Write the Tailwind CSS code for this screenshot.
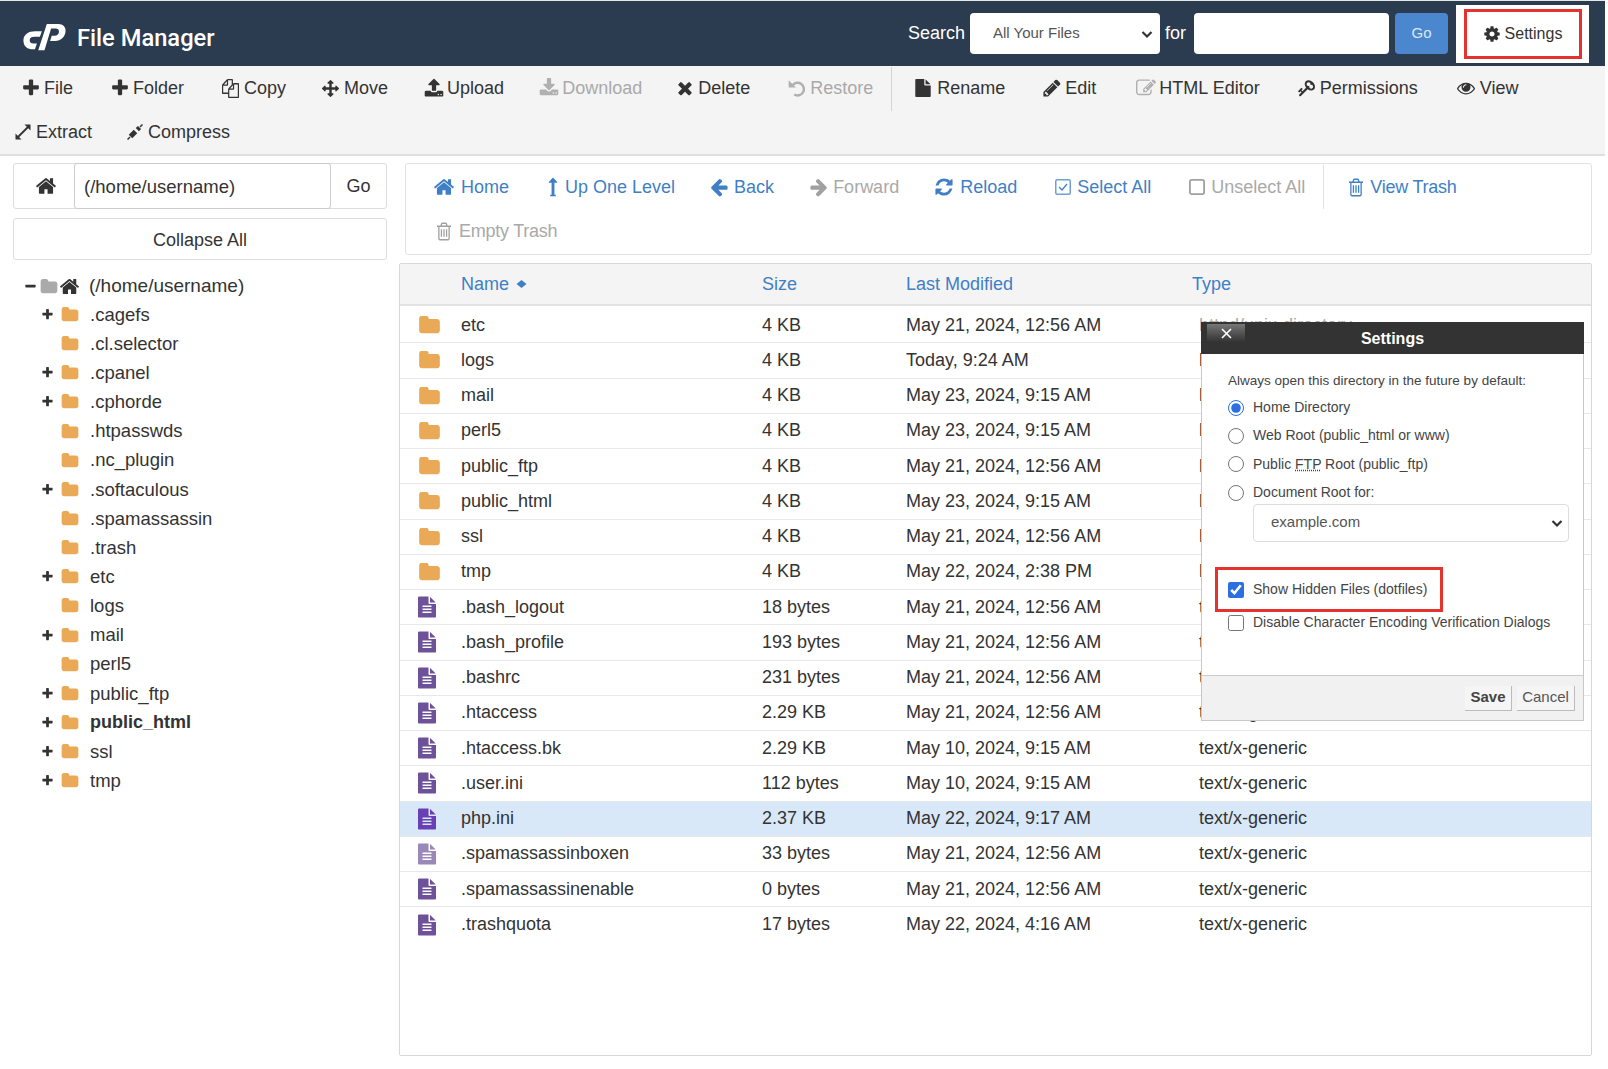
<!DOCTYPE html>
<html lang="en">
<head>
<meta charset="UTF-8">
<title>File Manager</title>
<script src="https://cdn.jsdelivr.net/npm/@tailwindcss/browser@4"></script>
</head>
<body class="bg-white text-[#333] text-[18px] font-['Liberation_Sans',Arial,sans-serif]">

<!-- icon set -->
<svg class="hidden">
  <symbol id="i-plus" viewBox="0 0 1792 1792"><path d="M1600 736v192q0 40-28 68t-68 28h-416v416q0 40-28 68t-68 28h-192q-40 0-68-28t-28-68v-416h-416q-40 0-68-28t-28-68v-192q0-40 28-68t68-28h416v-416q0-40 28-68t68-28h192q40 0 68 28t28 68v416h416q40 0 68 28t28 68z"/></symbol>
  <symbol id="i-minus" viewBox="0 0 1792 1792"><path d="M1600 736v192q0 40-28 68t-68 28h-1216q-40 0-68-28t-28-68v-192q0-40 28-68t68-28h1216q40 0 68 28t28 68z"/></symbol>
  <symbol id="i-home" viewBox="0 0 1792 1792"><path d="M1472 992v480q0 26-19 45t-45 19h-384v-384h-256v384h-384q-26 0-45-19t-19-45v-480q0-1 .5-3t.5-3l575-474 575 474q1 2 1 6zm223-69l-62 74q-8 9-21 11h-3q-13 0-21-7l-692-577-692 577q-12 8-24 7-13-2-21-11l-62-74q-8-10-7-23.5t11-21.5l719-599q32-26 76-26t76 26l244 204v-195q0-14 9-23t23-9h192q14 0 23 9t9 23v408l219 182q10 8 11 21.5t-7 23.5z"/></symbol>
  <symbol id="i-folder" viewBox="0 150 1792 1450"><path d="M1728 608v704q0 92-66 158t-158 66h-1216q-92 0-158-66t-66-158v-960q0-92 66-158t158-66h320q92 0 158 66t66 158v32h672q92 0 158 66t66 158z"/></symbol>
  <symbol id="i-times" viewBox="0 0 1792 1792"><path d="M1490 1322q0 40-28 68l-136 136q-28 28-68 28t-68-28l-294-294-294 294q-28 28-68 28t-68-28l-136-136q-28-28-28-68t28-68l294-294-294-294q-28-28-28-68t28-68l136-136q28-28 68-28t68 28l294 294 294-294q28-28 68-28t68 28l136 136q28 28 28 68t-28 68l-294 294 294 294q28 28 28 68z"/></symbol>
  <symbol id="i-left" viewBox="0 0 1792 1792"><path d="M1664 896v128q0 53-32.5 90.5t-84.5 37.5h-704l293 294q38 36 38 90t-38 90l-75 76q-38 38-91 38-52 0-90-38l-651-652q-37-37-37-90 0-52 37-91l651-650q38-38 90-38 53 0 91 38l75 74q38 38 38 91t-38 91l-293 293h704q52 0 84.5 37.5t32.5 90.5z"/></symbol>
  <symbol id="i-right" viewBox="0 0 1792 1792"><path d="M1600 960q0 54-37 91l-651 651q-39 37-91 37-51 0-90-37l-75-75q-38-38-38-91t38-91l293-293h-704q-52 0-84.5-37.5t-32.5-90.5v-128q0-53 32.5-90.5t84.5-37.5h704l-293-294q-38-36-38-90t38-90l75-75q38-38 90-38 53 0 91 38l651 651q37 35 37 90z"/></symbol>
  <symbol id="i-file" viewBox="0 0 1792 1792"><path d="M1152 512v-472q22 14 36 28l408 408q14 14 28 36h-472zm-128 32q0 40 28 68t68 28h544v1056q0 40-28 68t-68 28h-1344q-40 0-68-28t-28-68v-1600q0-40 28-68t68-28h800v544z"/></symbol>
  <symbol id="i-doc" viewBox="128 0 1536 1792"><path d="M1596 476q14 14 28 36h-472v-472q22 14 36 28zm-476 164h544v1056q0 40-28 68t-68 28h-1344q-40 0-68-28t-28-68v-1600q0-40 28-68t68-28h800v544q0 40 28 68t68 28zm160 736v-64q0-14-9-23t-23-9h-704q-14 0-23 9t-9 23v64q0 14 9 23t23 9h704q14 0 23-9t9-23zm0-256v-64q0-14-9-23t-23-9h-704q-14 0-23 9t-9 23v64q0 14 9 23t23 9h704q14 0 23-9t9-23zm0-256v-64q0-14-9-23t-23-9h-704q-14 0-23 9t-9 23v64q0 14 9 23t23 9h704q14 0 23-9t9-23z"/></symbol>
  <symbol id="i-gear" viewBox="0 0 1792 1792"><path d="M1152 896q0-106-75-181t-181-75-181 75-75 181 75 181 181 75 181-75 75-181zm512-109v222q0 12-8 23t-20 13l-185 28q-19 54-39 91 35 50 107 138 10 12 10 25t-9 23q-27 37-99 108t-94 71q-12 0-26-9l-138-108q-44 23-91 38-16 136-29 186-7 28-36 28h-222q-14 0-24.5-8.5t-11.5-21.5l-28-184q-49-16-90-37l-141 107q-10 9-25 9-14 0-25-11-126-114-165-168-7-10-7-23 0-12 8-23 15-21 51-66.5t54-70.5q-27-50-41-99l-183-27q-13-2-21-12.5t-8-23.5v-222q0-12 8-23t19-13l186-28q14-46 39-92-40-57-107-138-10-12-10-24 0-10 9-23 26-36 98.5-107.5t94.5-71.5q13 0 26 10l138 107q44-23 91-38 16-136 29-186 7-28 36-28h222q14 0 24.5 8.5t11.5 21.5l28 184q49 16 90 37l142-107q9-9 24-9 13 0 25 10 129 119 165 170 7 8 7 22 0 12-8 23-15 21-51 66.5t-54 70.5q26 50 41 98l183 28q13 2 21 12.5t8 23.5z"/></symbol>
  <symbol id="i-pencil" viewBox="0 0 1792 1792"><path d="M491 1536l91-91-235-235-91 91v107h128v128h107zm523-928q0-22-22-22-10 0-17 7l-542 542q-7 7-7 17 0 22 22 22 10 0 17-7l542-542q7-7 7-17zm-54-192l416 416-832 832h-416v-416zm683 96q0 53-37 90l-166 166-416-416 166-165q36-38 90-38 53 0 91 38l235 234q37 39 37 91z"/></symbol>
  <symbol id="i-key" viewBox="0 0 1792 1792"><path d="M832 512q0-80-56-136t-136-56-136 56-56 136q0 42 19 83-41-19-83-19-80 0-136 56t-56 136 56 136 136 56 136-56 56-136q0-42-19-83 41 19 83 19 80 0 136-56t56-136zm851 704q0 17-49 66t-66 49q-9 0-28.5-16t-36.5-33-38.5-40-24.5-26l-96 96 220 220q28 28 28 68 0 42-39 81t-81 39q-40 0-68-28l-671-671q-176 131-365 131-163 0-265.5-102.5t-102.5-265.5q0-160 95-313t248-248 313-95q163 0 265.5 102.5t102.5 265.5q0 189-131 365l355 355 96-96q-3-3-26-24.5t-40-38.5-33-36.5-16-28.5q0-17 49-66t66-49q13 0 23 10 6 6 46 44.5t82 79.5 86.5 86 73 78 28.5 41z"/></symbol>
  <symbol id="i-eye" viewBox="0 0 1792 1792"><path d="M1664 960q-152-236-381-353 61 104 61 225 0 185-131.5 316.5t-316.5 131.5-316.5-131.5-131.5-316.5q0-121 61-225-229 117-381 353 133 205 333.5 326.5t434.5 121.5 434.5-121.5 333.5-326.5zm-720-384q0-20-14-34t-34-14q-125 0-214.5 89.5t-89.5 214.5q0 20 14 34t34 14 34-14 14-34q0-86 61-147t147-61q20 0 34-14t14-34zm848 384q0 34-20 69-140 230-376.5 368.5t-499.5 138.5-499.5-139-376.5-368q-20-35-20-69t20-69q140-229 376.5-368t499.5-139 499.5 139 376.5 368q20 35 20 69z"/></symbol>
  <symbol id="i-refresh" viewBox="0 0 1792 1792"><path d="M1639 1056q0 5-1 7-64 268-268 434.5t-478 166.5q-146 0-282.5-55t-243.5-157l-129 129q-19 19-45 19t-45-19-19-45v-448q0-26 19-45t45-19h448q26 0 45 19t19 45-19 45l-137 137q71 66 161 102t187 36q134 0 250-65t186-179q11-17 53-117 8-23 30-23h192q13 0 22.5 9.5t9.5 22.5zm25-800v448q0 26-19 45t-45 19h-448q-26 0-45-19t-19-45 19-45l138-138q-148-137-349-137-134 0-250 65t-186 179q-11 17-53 117-8 23-30 23h-199q-13 0-22.5-9.5t-9.5-22.5v-7q65-268 270-434.5t480-166.5q146 0 284 55.5t245 156.5l130-129q19-19 45-19t45 19 19 45z"/></symbol>
  <symbol id="i-trash" viewBox="0 0 1792 1792" preserveAspectRatio="none"><path d="M704 736v576q0 14-9 23t-23 9h-64q-14 0-23-9t-9-23v-576q0-14 9-23t23-9h64q14 0 23 9t9 23zm256 0v576q0 14-9 23t-23 9h-64q-14 0-23-9t-9-23v-576q0-14 9-23t23-9h64q14 0 23 9t9 23zm256 0v576q0 14-9 23t-23 9h-64q-14 0-23-9t-9-23v-576q0-14 9-23t23-9h64q14 0 23 9t9 23zm128 724v-948h-896v948q0 22 7 40.5t14.5 27 10.5 8.5h832q3 0 10.5-8.5t14.5-27 7-40.5zm-672-1076h448l-48-117q-7-9-17-11h-317q-10 2-17 11zm928 32v64q0 14-9 23t-23 9h-96v948q0 83-47 143.5t-113 60.5h-832q-66 0-113-58.5t-47-141.5v-952h-96q-14 0-23-9t-9-23v-64q0-14 9-23t23-9h309l70-167q15-37 54-63t79-26h320q40 0 79 26t54 63l70 167h309q14 0 23 9t9 23z"/></symbol>
  <symbol id="i-move" viewBox="0 0 1792 1792"><path d="M1792 896q0 26-19 45l-256 256q-19 19-45 19t-45-19-19-45v-128h-384v384h128q26 0 45 19t19 45-19 45l-256 256q-19 19-45 19t-45-19l-256-256q-19-19-19-45t19-45 45-19h128v-384h-384v128q0 26-19 45t-45 19-45-19l-256-256q-19-19-19-45t19-45l256-256q19-19 45-19t45 19 19 45v128h384v-384h-128q-26 0-45-19t-19-45 19-45l256-256q19-19 45-19t45 19l256 256q19 19 19 45t-19 45-45 19h-128v384h384v-128q0-26 19-45t45-19 45 19l256 256q19 19 19 45z"/></symbol>
  <symbol id="i-upload" viewBox="0 0 1792 1792"><path d="M1344 1472q0-26-19-45t-45-19-45 19-19 45 19 45 45 19 45-19 19-45zm256 0q0-26-19-45t-45-19-45 19-19 45 19 45 45 19 45-19 19-45zm128-224v320q0 40-28 68t-68 28h-1472q-40 0-68-28t-28-68v-320q0-40 28-68t68-28h427q21 56 70.5 92t110.5 36h256q61 0 110.5-36t70.5-92h427q40 0 68 28t28 68zm-325-648q-17 40-59 40h-256v448q0 26-19 45t-45 19h-256q-26 0-45-19t-19-45v-448h-256q-42 0-59-40-17-39 14-69l448-448q18-19 45-19t45 19l448 448q31 30 14 69z"/></symbol>
  <symbol id="i-download" viewBox="0 0 1792 1792"><path d="M1344 1344q0-26-19-45t-45-19-45 19-19 45 19 45 45 19 45-19 19-45zm256 0q0-26-19-45t-45-19-45 19-19 45 19 45 45 19 45-19 19-45zm128-224v320q0 40-28 68t-68 28h-1472q-40 0-68-28t-28-68v-320q0-40 28-68t68-28h465l135 136q58 56 136 56t136-56l136-136h464q40 0 68 28t28 68zm-325-569q17 41-14 70l-448 448q-18 19-45 19t-45-19l-448-448q-31-29-14-70 17-39 59-39h256v-448q0-26 19-45t45-19h256q26 0 45 19t19 45v448h256q42 0 59 39z"/></symbol>
  <symbol id="i-copy" viewBox="0 0 1792 1792" preserveAspectRatio="none"><path d="M1696 384q40 0 68 28t28 68v1216q0 40-28 68t-68 28h-960q-40 0-68-28t-28-68v-288h-544q-40 0-68-28t-28-68v-672q0-40 20-88t48-76l408-408q28-28 76-48t88-20h416q40 0 68 28t28 68v328q68-40 128-40h416zm-544 213l-299 299h299v-299zm-640-384l-299 299h299v-299zm196 647l316-316v-416h-384v416q0 40-28 68t-68 28h-416v640h512v-256q0-40 20-88t48-76zm956 804v-1152h-384v416q0 40-28 68t-68 28h-416v640h896z"/></symbol>
  <symbol id="i-edit" viewBox="0 0 1792 1792"><path d="M888 1184l116-116-152-152-116 116v56h96v96h56zm440-720q-16-16-33 1l-350 350q-17 17-1 33t33-1l350-350q17-17 1-33zm80 594v190q0 119-84.5 203.5t-203.5 84.5h-832q-119 0-203.5-84.5t-84.5-203.5v-832q0-119 84.5-203.5t203.5-84.5h832q63 0 117 25 15 7 18 23 3 17-9 29l-49 49q-14 14-32 8-23-6-45-6h-832q-66 0-113 47t-47 113v832q0 66 47 113t113 47h832q66 0 113-47t47-113v-126q0-13 9-22l64-64q15-15 35-7t20 29zm-96-738l288 288-672 672h-288v-288zm444 132l-92 92-288-288 92-92q28-28 68-28t68 28l152 152q28 28 28 68t-28 68z"/></symbol>
  <symbol id="i-up" viewBox="0 0 1792 1792"><path d="M1277 493q-9 19-29 19h-224v1088h128v128h-512v-128h128v-1088h-224q-21 0-29-19t5-35l350-384q10-10 23-10 14 0 24 10l355 384q13 16 5 35z"/></symbol>
</svg>

<div class="w-[1605px]">
  <!-- top bar -->
  <header class="h-[66px] bg-[#2b3c50] border-t border-[#e8e8e8] flex items-center pl-[23px] text-white">
    <svg class="w-[43px] h-[27px] mt-[7px]" viewBox="69 38 128 82" fill="#fff">
      <path d="M125 60H105C84 60 69 70 69 88C69 106 82 115 98 115H104L110 97H100C92 97 88 93 88 87C88 80 94 77 102 77H119Z"/>
      <path d="M140 38H175C190 38 197 47 197 58C197 76 183 90 165 90H150L155 74H164C172 74 177 68 177 61C177 55 173 52 167 52H153L133 118H114Z"/>
    </svg>
    <h1 class="ml-[11px] mt-[10px] text-[23.700px] font-['Roboto',sans-serif] font-medium">File Manager</h1>
    <div class="ml-auto flex items-center h-full">
      <span>Search</span>
      <div class="relative ml-[5px]">
        <select class="appearance-none w-[190px] h-[41px] pl-[23px] bg-white rounded text-[15px] text-[#555]">
          <option>All Your Files</option>
        </select>
        <svg class="absolute right-[7px] top-[15px] w-[12px] h-[12px]" viewBox="0 0 12 12" fill="none" stroke="#333" stroke-width="2.200"><path d="M1.500 4l4.500 4.500L10.500 4"/></svg>
      </div>
      <span class="ml-[5px]">for</span>
      <input type="text" class="ml-[8px] w-[195px] h-[41px] bg-white rounded">
      <button class="ml-[6px] w-[53px] h-[41px] bg-[#4a87cf] rounded text-[15px] text-[#dbe7f5]">Go</button>
      <div class="ml-[8px] mr-[16px] w-[133px] h-[58px] bg-white flex items-center justify-center">
        <div class="w-[118px] h-[50px] border-[3px] border-[#e5322d] flex items-center justify-center gap-[4px] text-[16px] text-[#333]">
          <svg class="w-[18px] h-[18px]" fill="#333"><use href="#i-gear"/></svg>Settings
        </div>
      </div>
    </div>
  </header>

  <!-- main toolbar -->
  <nav class="h-[90px] bg-[#f4f4f4] border-b-2 border-[#dedede]">
    <div class="h-[44px] flex items-center pl-[21px]">
      <a class="flex items-center gap-[3px]"><svg class="w-[20px] h-[20px]" fill="#333"><use href="#i-plus"/></svg>File</a>
      <a class="ml-[37px] flex items-center gap-[3px]"><svg class="w-[20px] h-[20px]" fill="#333"><use href="#i-plus"/></svg>Folder</a>
      <a class="ml-[38px] flex items-center gap-[5px]"><svg class="w-[17px] h-[19px]" fill="#333"><use href="#i-copy"/></svg>Copy</a>
      <a class="ml-[36px] flex items-center gap-[5px]"><svg class="w-[17px] h-[17px]" fill="#333"><use href="#i-move"/></svg>Move</a>
      <a class="ml-[36px] flex items-center gap-[3px]"><svg class="w-[20px] h-[20px]" fill="#333"><use href="#i-upload"/></svg>Upload</a>
      <a class="ml-[35px] flex items-center gap-[3px] text-[#a9a9a9]"><svg class="w-[20px] h-[20px]" fill="#b0b0b0"><use href="#i-download"/></svg>Download</a>
      <a class="ml-[33px] flex items-center gap-[3px]"><svg class="w-[20px] h-[20px]" fill="#333"><use href="#i-times"/></svg>Delete</a>
      <a class="ml-[37px] flex items-center gap-[3px] text-[#a9a9a9]">
        <svg class="w-[20px] h-[20px]" viewBox="-1 -1 18 18" fill="#b0b0b0"><path d="M.5 1v6.500H7z"/><path d="M4 5.500A5.700 5.700 0 1 1 5.500 13.800" fill="none" stroke="#b0b0b0" stroke-width="2.200"/></svg>Restore</a>
      <span class="ml-[18px] w-px h-[44px] mt-[2px] bg-[#d4d4d4]"></span>
      <a class="ml-[22px] flex items-center gap-[5px]"><svg class="w-[18px] h-[18px]" fill="#333"><use href="#i-file"/></svg>Rename</a>
      <a class="ml-[37px] flex items-center gap-[3px]"><svg class="w-[20px] h-[20px]" fill="#333"><use href="#i-pencil"/></svg>Edit</a>
      <a class="ml-[40px] flex items-center gap-[3px]"><svg class="w-[20px] h-[20px]" fill="#b0b0b0"><use href="#i-edit"/></svg>HTML Editor</a>
      <a class="ml-[37px] flex items-center gap-[5px]"><svg class="w-[18px] h-[18px] -scale-x-100" fill="#333"><use href="#i-key"/></svg>Permissions</a>
      <a class="ml-[39px] flex items-center gap-[5px]"><svg class="w-[18px] h-[18px]" fill="#333"><use href="#i-eye"/></svg>View</a>
    </div>
    <div class="h-[44px] flex items-center pl-[15px]">
      <a class="flex items-center gap-[5px]">
        <svg class="w-[16px] h-[16px]" viewBox="0 0 16 16" fill="#333"><path d="M9.500 .5H15.500V6.500Z"/><path d="M.5 9.500V15.500H6.500Z"/><path d="M3 13L13 3" stroke="#333" stroke-width="1.800"/></svg>Extract</a>
      <a class="ml-[35px] flex items-center gap-[5px]">
        <svg class="w-[16px] h-[16px]" viewBox="0 0 16 16" fill="none" stroke="#333"><path d="M.5 15.500L3 13" stroke-width="1.500"/><path d="M3.500 12.500L8.500 7.500" stroke-width="5"/><path d="M10.300 5.700L12.500 3.500" stroke-width="4.500"/><path d="M13 3L15.500 .5" stroke-width="1.500"/></svg>Compress</a>
    </div>
  </nav>

  <main class="flex pl-[13px] pt-[7px]">
    <!-- directory tree -->
    <aside class="w-[374px] shrink-0">
      <div class="flex h-[46px] border border-[#ddd] rounded-[3px]">
        <div class="w-[60px] flex items-center justify-center pl-[4px]"><svg class="w-[22px] h-[22px]" fill="#333"><use href="#i-home"/></svg></div>
        <div class="w-[257px] flex items-center pl-[9px] pt-[1px] text-[18.500px] border border-[#ccc] -my-px rounded-[3px]">(/home/username)</div>
        <div class="flex-1 flex items-center justify-center pt-[1px]">Go</div>
      </div>
      <button class="block w-full h-[42px] mt-[9px] pt-[2px] border border-[#ddd] rounded-[3px]">Collapse All</button>
      <ul id="tree" class="mt-[12px]"></ul>
    </aside>

    <!-- file list -->
    <section class="w-[1193px] ml-[12px]">
      <div class="ml-[6px] h-[92px] border border-[#e2e2e2] rounded-[3px] text-[#3f7fc6]">
        <div class="h-[46px] flex items-center pl-[27px]">
          <a class="flex items-center gap-[6px]"><svg class="w-[22px] h-[22px]" fill="#3f7fc6"><use href="#i-home"/></svg>Home</a>
          <a class="ml-[34px] flex items-center gap-[2px]"><svg class="w-[20px] h-[20px]" fill="#3f7fc6"><use href="#i-up"/></svg>Up One Level</a>
          <a class="ml-[34px] flex items-center gap-[5px]"><svg class="w-[20px] h-[20px]" fill="#3f7fc6"><use href="#i-left"/></svg>Back</a>
          <a class="ml-[35px] flex items-center gap-[4px] text-[#a9a9a9]"><svg class="w-[20px] h-[20px]" fill="#a0a0a0"><use href="#i-right"/></svg>Forward</a>
          <a class="ml-[35px] flex items-center gap-[6px]"><svg class="w-[20px] h-[20px]" fill="#3f7fc6"><use href="#i-refresh"/></svg>Reload</a>
          <a class="ml-[38px] flex items-center gap-[6px]">
            <svg class="w-[16px] h-[16px]" viewBox="0 0 16 16" fill="none"><rect x=".75" y=".75" width="14.500" height="14.500" rx="1.500" stroke="#6f9fd8" stroke-width="1.500"/><path d="M4 8l3 3 5-6" stroke="#3f7fc6" stroke-width="1.300"/></svg>Select All</a>
          <a class="ml-[38px] flex items-center gap-[6px] text-[#a9a9a9]">
            <svg class="w-[16px] h-[16px]" viewBox="0 0 16 16" fill="none"><rect x=".9" y=".9" width="14.200" height="14.200" rx="1.800" stroke="#a0a0a0" stroke-width="1.800"/></svg>Unselect All</a>
          <span class="ml-[18px] w-px h-[44px] bg-[#e2e2e2]"></span>
          <a class="ml-[23px] flex items-center gap-[5px] tracking-[-0.25px]"><svg class="w-[18px] h-[21px]" fill="#3f7fc6"><use href="#i-trash"/></svg>View Trash</a>
        </div>
        <div class="h-[42px] flex items-center pl-[29px]">
          <a class="flex items-center gap-[6px] text-[#a9a9a9] tracking-[-0.25px]"><svg class="w-[18px] h-[21px]" fill="#a0a0a0"><use href="#i-trash"/></svg>Empty Trash</a>
        </div>
      </div>

      <div class="mt-[8px] h-[793px] border border-[#d8d8d8] rounded-[2px]">
        <div class="grid grid-cols-[61px_301px_144px_286px_1fr] h-[42px] items-center bg-[#f4f4f4] border-b-2 border-[#e2e2e2] text-[#3f7fc6]">
          <span></span>
          <span class="flex items-center gap-[7px]">Name <svg class="w-[11px] h-[10px]" viewBox="0 0 11 10" fill="#3f7fc6"><path d="M5.500 1l5 4-5 4-5-4z"/></svg></span>
          <span>Size</span>
          <span>Last Modified</span>
          <span>Type</span>
        </div>
        <div id="rows" class="mt-[2px]"></div>
      </div>
    </section>
  </main>
</div>

<!-- settings dialog -->
<div class="absolute left-[1201px] top-[322px] w-[383px] h-[399px] bg-white border border-[#c8c8c8] text-[14px] text-[#444]">
  <div class="h-[32px] pt-[1px] -mx-px -mt-px bg-[#333] relative flex items-center justify-center text-white text-[16px] font-bold">
    <button class="absolute left-[6px] top-[2px] w-[38px] h-[18px] bg-linear-to-b from-[#777] to-[#333] flex items-center justify-center">
      <svg class="w-[11px] h-[11px]" viewBox="0 0 11 11" stroke="#fff" stroke-width="1.600"><path d="M1 1l9 9M10 1l-9 9"/></svg>
    </button>
    Settings
  </div>
  <div class="pl-[26px] pt-[18px]">
    <p class="h-[18px] leading-[18px] text-[13.500px]">Always open this directory in the future by default:</p>
    <div class="mt-[8.500px] flex flex-col gap-[10.400px]">
      <label class="flex items-center gap-[9px] h-[18px]"><input type="radio" name="dir" checked class="w-[16px] h-[16px] m-0 accent-[#2d6fe0]"><span>Home Directory</span></label>
      <label class="flex items-center gap-[9px] h-[18px]"><input type="radio" name="dir" class="w-[16px] h-[16px] m-0"><span>Web Root (public_html or www)</span></label>
      <label class="flex items-center gap-[9px] h-[18px]"><input type="radio" name="dir" class="w-[16px] h-[16px] m-0"><span>Public <abbr class="underline decoration-dotted">FTP</abbr> Root (public_ftp)</span></label>
      <label class="flex items-center gap-[9px] h-[18px]"><input type="radio" name="dir" class="w-[16px] h-[16px] m-0"><span>Document Root for:</span></label>
    </div>
    <div class="relative mt-[2px] ml-[25px] w-[316px]">
      <select class="appearance-none w-full h-[38px] pl-[17px] border border-[#ddd] rounded text-[15px] text-[#555]">
        <option>example.com</option>
      </select>
      <svg class="absolute right-[6px] top-[13px] w-[12px] h-[12px]" viewBox="0 0 12 12" fill="none" stroke="#333" stroke-width="2.200"><path d="M1.500 4l4.500 4.500L10.500 4"/></svg>
    </div>
    <div class="mt-[25px] -ml-[13px] w-[228px] h-[45px] pt-[1px] border-[3px] border-[#e5322d] flex items-center pl-[10px] gap-[9px]">
      <input type="checkbox" checked class="w-[16px] h-[16px] m-0 accent-[#2d6fe0]"><span>Show Hidden Files (dotfiles)</span>
    </div>
    <label class="mt-[2px] flex items-center gap-[9px] h-[18px]"><input type="checkbox" class="w-[16px] h-[16px] m-0"><span>Disable Character Encoding Verification Dialogs</span></label>
  </div>
  <div class="absolute left-0 right-0 bottom-0 h-[45px] bg-[#f1f1f1] border-t border-[#ccc] flex items-center justify-end pr-[8px] gap-[5px] text-[15px]">
    <button class="w-[47px] h-[25px] bg-[#f5f5f5] border-r border-b border-[#bbb] font-bold">Save</button>
    <button class="w-[58px] h-[25px] bg-[#f5f5f5] border-r border-b border-[#bbb] text-[#555]">Cancel</button>
  </div>
</div>

<script>
  const dirs = [
    [".cagefs", 1], [".cl.selector", 0], [".cpanel", 1], [".cphorde", 1], [".htpasswds", 0],
    [".nc_plugin", 0], [".softaculous", 1], [".spamassassin", 0], [".trash", 0], ["etc", 1],
    ["logs", 0], ["mail", 1], ["perl5", 0], ["public_ftp", 1], ["public_html", 1], ["ssl", 1], ["tmp", 1]
  ];
  let treeHtml = `<li class="flex items-center h-[28px] pl-[11px] text-[19px]">
      <svg class="w-[13px] h-[13px]" fill="#333"><use href="#i-minus"/></svg>
      <svg class="w-[18px] h-[15px] ml-[3px]" fill="#aaa"><use href="#i-folder"/></svg>
      <svg class="w-[21px] h-[21px] ml-[1px]" fill="#333"><use href="#i-home"/></svg>
      <span class="ml-[9px]">(/home/username)</span></li>`;
  for (const [name, plus] of dirs) {
    const bold = name === "public_html" ? "font-bold text-[18px]" : "";
    treeHtml += `<li class="flex items-center h-[29.150px] pl-[28px] text-[18.500px]">
      <span class="w-[13px] h-[13px]">${plus ? '<svg class="w-[13px] h-[13px]" fill="#333"><use href="#i-plus"/></svg>' : ""}</span>
      <svg class="w-[18px] h-[15px] ml-[7px]" fill="#eaa957"><use href="#i-folder"/></svg>
      <span class="ml-[11px] ${bold}">${name}</span></li>`;
  }
  document.getElementById("tree").innerHTML = treeHtml;

  const D = "httpd/unix-directory", T = "text/x-generic";
  const files = [
    ["etc", "4 KB", "May 21, 2024, 12:56 AM", D], ["logs", "4 KB", "Today, 9:24 AM", D],
    ["mail", "4 KB", "May 23, 2024, 9:15 AM", D], ["perl5", "4 KB", "May 23, 2024, 9:15 AM", D],
    ["public_ftp", "4 KB", "May 21, 2024, 12:56 AM", D], ["public_html", "4 KB", "May 23, 2024, 9:15 AM", D],
    ["ssl", "4 KB", "May 21, 2024, 12:56 AM", D], ["tmp", "4 KB", "May 22, 2024, 2:38 PM", D],
    [".bash_logout", "18 bytes", "May 21, 2024, 12:56 AM", T], [".bash_profile", "193 bytes", "May 21, 2024, 12:56 AM", T],
    [".bashrc", "231 bytes", "May 21, 2024, 12:56 AM", T], [".htaccess", "2.29 KB", "May 21, 2024, 12:56 AM", T],
    [".htaccess.bk", "2.29 KB", "May 10, 2024, 9:15 AM", T], [".user.ini", "112 bytes", "May 10, 2024, 9:15 AM", T],
    ["php.ini", "2.37 KB", "May 22, 2024, 9:17 AM", T], [".spamassassinboxen", "33 bytes", "May 21, 2024, 12:56 AM", T],
    [".spamassassinenable", "0 bytes", "May 21, 2024, 12:56 AM", T], [".trashquota", "17 bytes", "May 22, 2024, 4:16 AM", T]
  ];
  document.getElementById("rows").innerHTML = files.map(([name, size, date, type], i) => {
    const selected = name === "php.ini";
    const icon = type === D
      ? '<svg class="w-[23px] h-[18px]" fill="#eaa957"><use href="#i-folder"/></svg>'
      : `<svg class="w-[18px] h-[22px]" fill="${selected ? "#6a3fb5" : name === ".spamassassinboxen" ? "#9a88b8" : "#6d5299"}"><use href="#i-doc"/></svg>`;
    return `<div class="grid grid-cols-[61px_301px_144px_293px_1fr] h-[35.250px] items-center border-b border-[#e8e8e8] last:border-b-0 ${selected ? "bg-[#d8e8f9]" : ""}">
      <span class="pl-[18px] flex items-center">${icon}</span>
      <span>${name}</span><span>${size}</span><span>${date}</span><span class="${i === 0 ? "text-[#aaa]" : ""}">${type}</span></div>`;
  }).join("");
</script>
</body>
</html>
